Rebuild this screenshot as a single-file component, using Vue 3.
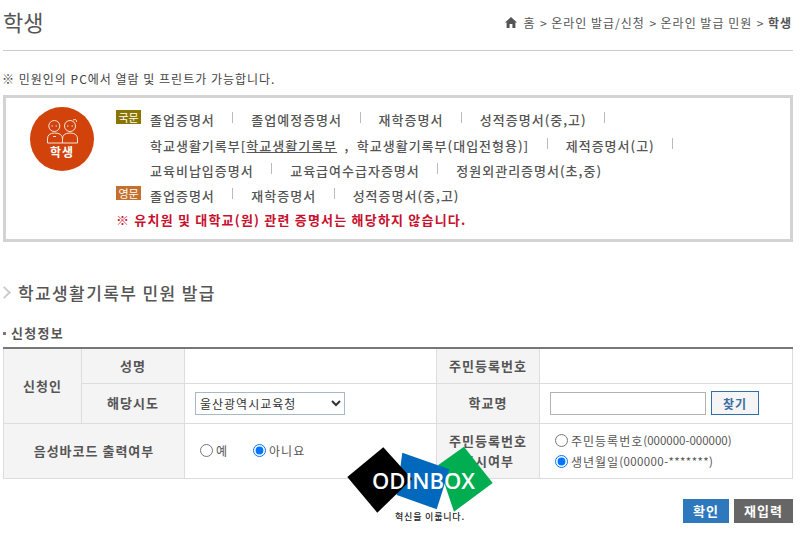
<script setup>
  import { ref } from 'vue';

  // 민원 목록
  const koreanRows = [
    { indent: false, items: [{ label: '졸업증명서' }, { label: '졸업예정증명서' }, { label: '재학증명서' }, { label: '성적증명서(중,고)' }] },
    { indent: true, items: [{ html: true }, { label: '제적증명서(고)' }] },
    { indent: true, items: [{ label: '교육비납입증명서' }, { label: '교육급여수급자증명서' }, { label: '정원외관리증명서(초,중)', last: true }] },
  ];
  const englishRow = ['졸업증명서', '재학증명서', '성적증명서(중,고)'];

  const barcode = ref('no');
  const idType = ref('birth');
  const region = ref('울산광역시교육청');
</script>

<template>
  <div class="page">
    <header class="top">
      <h1>학생</h1>
      <nav class="crumbs">
        <svg class="home" viewBox="0 0 12 11" width="12" height="11">
          <path d="M6 0 L12 5.6 L10.4 5.6 L10.4 11 L7.4 11 L7.4 7 L4.6 7 L4.6 11 L1.6 11 L1.6 5.6 L0 5.6 Z" fill="#555" />
        </svg>
        <span>홈</span><i>&gt;</i><span>온라인 발급/신청</span><i>&gt;</i><span>온라인 발급 민원</span><i>&gt;</i><b>학생</b>
      </nav>
    </header>

    <p class="notice">※ 민원인의 PC에서 열람 및 프린트가 가능합니다.</p>

    <section class="box">
      <div class="badge">
        <svg viewBox="0 0 64 64" width="64" height="64">
          <circle cx="32" cy="32" r="32" fill="#d2430b" />
          <g fill="none" stroke="#f6e3d8" stroke-width="1">
            <circle cx="24.3" cy="19" r="5.5" />
            <circle cx="40" cy="19" r="5.5" />
            <path d="M17.5 36 V32 Q17.5 26 24.5 26 Q32.5 26 32.5 32 V36 Z" />
            <path d="M32.5 32 Q32.5 26 40 26 Q47.5 26 47.5 32 V36 H32.5" />
            <path d="M43 13 Q47 11.5 46.5 15" />
          </g>
          <path d="M21.5 19 h1.5 M25.5 19 h1.5 M37 19 h1.5 M41.5 19 h1.5 M23 29.5 h3" stroke="#f6e3d8" stroke-width="1" />
        </svg>
        <span class="badge-text">학생</span>
      </div>
      <div class="lists">
        <div v-for="(row, i) in koreanRows" :key="i" class="doc-row" :class="{ indent: row.indent }">
          <span v-if="i === 0" class="tag kor">국문</span>
          <template v-for="(item, j) in row.items" :key="j">
            <a v-if="item.html" class="doc wide">학교생활기록부[<u>학교생활기록부</u> , 학교생활기록부(대입전형용)]</a>
            <a v-else class="doc">{{ item.label }}</a>
            <span v-if="!item.last" class="sep"></span>
          </template>
        </div>
        <div class="doc-row">
          <span class="tag eng">영문</span>
          <template v-for="(label, j) in englishRow" :key="label">
            <a class="doc">{{ label }}</a>
            <span v-if="j < englishRow.length - 1" class="sep"></span>
          </template>
        </div>
        <p class="warn">※ 유치원 및 대학교(원) 관련 증명서는 해당하지 않습니다.</p>
      </div>
    </section>

    <h2 class="section">학교생활기록부 민원 발급</h2>
    <h3 class="sub">신청정보</h3>

    <table class="form">
      <colgroup>
        <col style="width: 78px" />
        <col style="width: 103px" />
        <col style="width: 252px" />
        <col style="width: 103px" />
        <col />
      </colgroup>
      <tbody>
        <tr class="r1">
          <th rowspan="2">신청인</th>
          <th>성명</th>
          <td></td>
          <th>주민등록번호</th>
          <td></td>
        </tr>
        <tr class="r2">
          <th>해당시도</th>
          <td>
            <select v-model="region" class="sel">
              <option>울산광역시교육청</option>
            </select>
          </td>
          <th>학교명</th>
          <td>
            <div class="school">
              <input type="text" class="txt" />
              <button type="button" class="find">찾기</button>
            </div>
          </td>
        </tr>
        <tr class="r3">
          <th colspan="2">음성바코드 출력여부</th>
          <td>
            <div class="radios">
              <label><input v-model="barcode" type="radio" value="yes" />예</label>
              <label><input v-model="barcode" type="radio" value="no" />아니요</label>
            </div>
          </td>
          <th>주민등록번호<br />표시여부</th>
          <td>
            <div class="radios stack">
              <label><input v-model="idType" type="radio" value="id" />주민등록번호<span class="num">(000000-000000)</span></label>
              <label><input v-model="idType" type="radio" value="birth" />생년월일<span class="num stars">(000000-*******)</span></label>
            </div>
          </td>
        </tr>
      </tbody>
    </table>

    <div class="actions">
      <button type="button" class="btn ok">확인</button>
      <button type="button" class="btn reset">재입력</button>
    </div>

    <!-- 워터마크 로고 -->
    <div class="logo">
      <svg viewBox="0 0 148 67" width="148" height="67">
        <polygon points="118,0.7 146.7,37 108,65.7 92.3,19" fill="#00ad50" />
        <polygon points="56.3,6.7 103.3,23.3 90.7,63.3 50.7,49" fill="#0068bd" />
        <polygon points="37.3,1.3 66,33 31.3,66.7 1.3,31" fill="#000" />
      </svg>
      <span class="logo-name">ODINBOX</span>
      <span class="logo-sub">혁신을 이룹니다.</span>
    </div>
  </div>
</template>

<style scoped>
.page {
  position: relative;
  width: 790px;
  margin-left: 3px;
  font-family: "Noto Sans CJK KR", "Noto Sans", sans-serif;
  color: #555;
  font-size: 12px;
}

.top {
  display: flex;
  justify-content: space-between;
  align-items: center;
  border-bottom: 1px solid #ccc;
  padding-bottom: 6px;
  height: 44px;
}

h1 {
  margin: -2px 0 0;
  font-size: 22px;
  font-weight: 400;
  color: #555;
}

.crumbs {
  display: flex;
  align-items: center;
  margin-right: 1px;
  font-size: 12px;
  letter-spacing: 1px;
  color: #555;
}

.home {
  margin-right: 6px;
}

.crumbs i {
  font-style: normal;
  margin: 0 4.5px;
  letter-spacing: 0;
}

.crumbs b {
  font-weight: 700;
}

.notice {
  margin: 19px 0 0 -1px;
  height: 25px;
  line-height: 18px;
  font-size: 12px;
  letter-spacing: 1px;
  color: #444;
}

.box {
  display: flex;
  box-sizing: border-box;
  height: 147px;
  border: 3px solid #d3d3d3;
  padding: 9px 0 0 24px;
}

.badge {
  position: relative;
  width: 64px;
  height: 64px;
  margin-right: 22px;
}

.badge-text {
  position: absolute;
  left: 0;
  right: 0;
  top: 36px;
  text-align: center;
  color: #fff;
  font-size: 12px;
  font-weight: 700;
  letter-spacing: 1px;
}

.lists {
  display: flex;
  flex-direction: column;
}

.doc-row {
  display: flex;
  align-items: center;
  height: 25.4px;
  font-weight: 500;
  letter-spacing: 1px;
  font-size: 13px;
}

.doc-row.indent {
  padding-left: 34px;
}

.tag {
  width: 25px;
  height: 14px;
  line-height: 14px;
  margin-right: 9px;
  margin-top: -6px;
  text-align: center;
  color: #fff;
  font-size: 11px;
  letter-spacing: 0;
  font-weight: 400;
}

.tag.kor {
  background: #8a7500;
}

.tag.eng {
  background: #c4702c;
}

.doc {
  color: #555;
  white-space: nowrap;
}

.doc.wide {
  word-spacing: 3.5px;
}

.sep {
  width: 1px;
  height: 11px;
  margin: -4px 18px 0 17.5px;
  background: #bbb;
}

.warn {
  margin: -2px 0 0;
  height: 25px;
  line-height: 25px;
  color: #c8102e;
  font-weight: 700;
  font-size: 13px;
  letter-spacing: 1.2px;
}

.section {
  position: relative;
  margin: 39px 0 0;
  padding-left: 15px;
  height: 24px;
  line-height: 24px;
  font-size: 17px;
  font-weight: 500;
  letter-spacing: 1.4px;
  color: #555;
}

.section::before {
  content: "";
  position: absolute;
  left: -3px;
  top: 7px;
  width: 7px;
  height: 7px;
  border-top: 2px solid #ccc;
  border-right: 2px solid #ccc;
  transform: rotate(45deg);
}

.sub {
  position: relative;
  margin: 19px 0 0;
  padding-left: 8px;
  height: 18px;
  line-height: 18px;
  font-size: 13px;
  font-weight: 700;
  letter-spacing: 1.3px;
  color: #555;
}

.sub::before {
  content: "";
  position: absolute;
  left: 0;
  top: 8px;
  width: 3px;
  height: 3px;
  background: #777;
}

.form {
  width: 790px;
  margin-top: 5px;
  border-collapse: collapse;
  table-layout: fixed;
  border-top: 2px solid #777;
}

.form th,
.form td {
  border: 1px solid #ddd;
  padding: 0;
  font-size: 13px;
}

.form tr:first-child th,
.form tr:first-child td {
  border-top: 2px solid #777;
}

.form th {
  background: #f4f4f4;
  font-weight: 700;
  color: #555;
  letter-spacing: 1px;
  line-height: 20px;
}

.form td {
  padding-left: 10px;
  color: #555;
}

.r1 {
  height: 35px;
}

.r2 {
  height: 40px;
}

.r3 {
  height: 55px;
}

.sel {
  width: 150px;
  height: 23px;
  border: 1px solid #a9b8c9;
  background: #fff;
  color: #333;
  font-family: inherit;
  font-size: 12px;
  letter-spacing: 1px;
}

.school {
  display: flex;
  gap: 5px;
  align-items: center;
}

.txt {
  box-sizing: border-box;
  width: 156px;
  height: 23px;
  border: 1px solid #b2b2b2;
  padding: 0;
}

.find {
  box-sizing: border-box;
  width: 48px;
  height: 24px;
  border: 1px solid #2e70ad;
  background: #f5f5f5;
  color: #3a6ea5;
  font-family: inherit;
  font-size: 12px;
  font-weight: 700;
  letter-spacing: 1px;
  padding: 0;
}

.radios {
  display: flex;
  gap: 25px;
  padding-left: 5px;
  font-size: 12px;
  letter-spacing: 1px;
}

.radios.stack {
  flex-direction: column;
  gap: 4px;
  padding-left: 5px;
}

.radios label {
  display: flex;
  align-items: center;
  white-space: nowrap;
}

.radios input {
  width: 13px;
  height: 13px;
  margin: 0 3px 0 0;
}

.num {
  font-size: 11.5px;
  letter-spacing: 0;
}

.num.stars {
  letter-spacing: 0.4px;
}

.actions {
  display: flex;
  justify-content: flex-end;
  gap: 5px;
  margin-top: 20px;
}

.btn {
  height: 24px;
  border: 0;
  color: #fff;
  font-family: inherit;
  font-size: 13px;
  font-weight: 700;
  letter-spacing: 1px;
  padding: 0;
}

.btn.ok {
  width: 46px;
  background: #2e78bd;
}

.btn.reset {
  width: 59px;
  background: #666;
}

.logo {
  position: absolute;
  left: 343px;
  top: 446px;
  width: 148px;
  height: 78px;
}

.logo svg {
  display: block;
}

.logo-name {
  position: absolute;
  left: 26px;
  top: 19px;
  color: #fff;
  font-family: "Open Sans", sans-serif;
  font-size: 22px;
  font-weight: 600;
  line-height: 30px;
}

.logo-sub {
  position: absolute;
  left: 49px;
  top: 65px;
  color: #222;
  font-size: 9px;
  font-weight: 500;
  letter-spacing: 0.8px;
  line-height: 12px;
  white-space: nowrap;
}
</style>
